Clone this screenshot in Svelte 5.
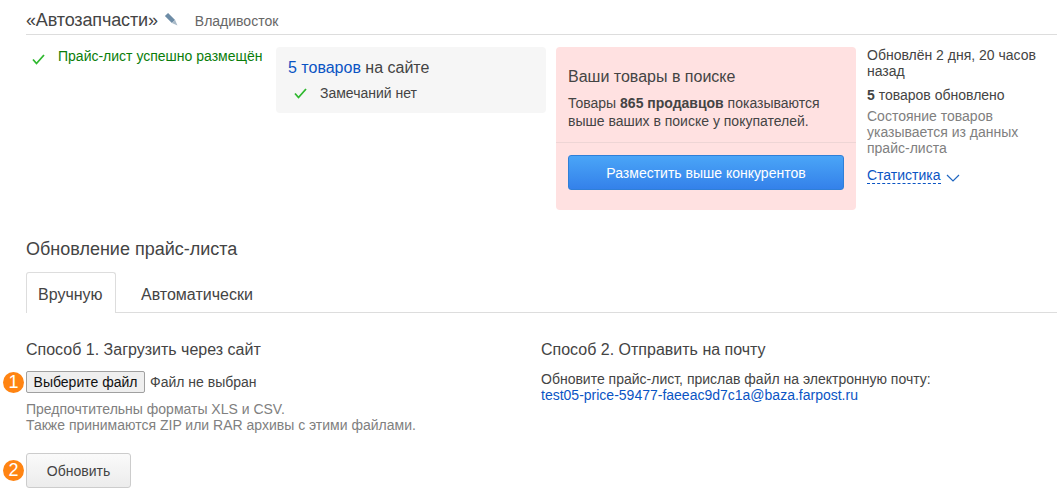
<script>
	const check = 'M1 5.5 L4.5 9.5 L12 1';
</script>

<div class="page">
	<header class="head">
		<span class="title">«Автозапчасти»</span>
		<svg class="pencil" width="14" height="14" viewBox="0 0 14 14">
			<path d="M2.5 2.5 L9.5 9.5" stroke="#6d8ca6" stroke-width="4.5" />
			<path d="M11.1 7.9 L13.5 13.5 L7.9 11.1 Z" fill="#a9bac8" />
		</svg>
		<span class="city">Владивосток</span>
	</header>

	<section class="summary">
		<div class="status">
			<svg class="tick" width="13" height="11" viewBox="0 0 13 11"><path d={check} /></svg>
			<span>Прайс-лист успешно размещён</span>
		</div>

		<div class="onsite">
			<div class="count"><a href="#goods">5 товаров</a> на сайте</div>
			<div class="remarks">
				<svg class="tick" width="13" height="11" viewBox="0 0 13 11"><path d={check} /></svg>
				<span>Замечаний нет</span>
			</div>
		</div>

		<div class="promo">
			<div class="promo-body">
				<h3>Ваши товары в поиске</h3>
				<p>Товары <b>865 продавцов</b> показываются выше ваших в поиске у покупателей.</p>
			</div>
			<div class="promo-foot">
				<button class="primary">Разместить выше конкурентов</button>
			</div>
		</div>

		<aside class="info">
			<p class="updated">Обновлён 2 дня, 20 часов назад</p>
			<p class="updated-count"><b>5</b> товаров обновлено</p>
			<p class="note">Состояние товаров указывается из данных прайс-листа</p>
			<div class="stats">
				<a href="#stats">Статистика</a>
				<svg width="14" height="8" viewBox="0 0 14 8"><path d="M1 1 L7 7 L13 1" /></svg>
			</div>
		</aside>
	</section>

	<h2>Обновление прайс-листа</h2>

	<nav class="tabs">
		<span class="tab active">Вручную</span>
		<span class="tab">Автоматически</span>
	</nav>

	<section class="ways">
		<div class="way">
			<h4>Способ 1. Загрузить через сайт</h4>
			<div class="file">
				<span class="badge">1</span>
				<button class="choose">Выберите файл</button>
				<span>Файл не выбран</span>
			</div>
			<p class="hint">Предпочтительны форматы XLS и CSV.<br />Также принимаются ZIP или RAR архивы с этими файлами.</p>
			<div class="submit">
				<span class="badge">2</span>
				<button class="update">Обновить</button>
			</div>
		</div>
		<div class="way">
			<h4>Способ 2. Отправить на почту</h4>
			<p class="mail">Обновите прайс-лист, прислав файл на электронную почту:<br /><a href="#mail">test05-price-59477-faeeac9d7c1a@baza.farpost.ru</a></p>
		</div>
	</section>
</div>

<style>
	:global(body) {
		background: #fff;
	}

	.page {
		box-sizing: border-box;
		width: 1057px;
		height: 498px;
		padding-left: 26px;
		overflow: hidden;
		font-family: 'Liberation Sans', Arial, sans-serif;
		font-size: 14px;
		color: #444;
	}

	a {
		color: #0a54c4;
		text-decoration: none;
	}

	p,
	h2,
	h3,
	h4 {
		margin: 0;
		font-weight: normal;
	}

	.head {
		display: flex;
		align-items: baseline;
		box-sizing: border-box;
		height: 35px;
		padding-top: 9px;
		border-bottom: 1px solid #ddd;
	}

	.title {
		font-size: 18px;
		line-height: 22px;
		letter-spacing: -0.14px;
	}

	.pencil {
		align-self: flex-start;
		margin: 3px 0 0 6px;
	}

	.city {
		margin-left: 17px;
		font-size: 14px;
		color: #666;
	}

	.tick path {
		fill: none;
		stroke: #2eb82e;
		stroke-width: 1.8;
	}

	.summary {
		display: grid;
		grid-template-columns: 250px 270px 300px 190px;
		align-items: start;
		padding-top: 12px;
	}

	.status {
		display: flex;
		gap: 13px;
		padding: 1px 0 0 6px;
		line-height: 16px;
		color: #0a7d0a;
		white-space: nowrap;
	}

	.status .tick {
		margin-top: 6px;
	}

	.onsite {
		box-sizing: border-box;
		height: 66px;
		padding: 11px 12px;
		background: #f6f6f6;
		border-radius: 4px;
	}

	.count {
		font-size: 16px;
		line-height: 20px;
	}

	.remarks {
		display: flex;
		align-items: center;
		gap: 13px;
		margin-top: 6px;
		padding-left: 6px;
		line-height: 18px;
	}

	.promo {
		margin-left: 10px;
		width: 300px;
		height: 163px;
		box-sizing: border-box;
		background: #ffe1e1;
		border-radius: 4px;
	}

	.promo-body {
		height: 96px;
		box-sizing: border-box;
		padding: 20px 12px 0;
		border-bottom: 1px solid #eed5d5;
	}

	.promo h3 {
		font-size: 16px;
		line-height: 20px;
		margin-bottom: 7px;
	}

	.promo p {
		line-height: 18px;
	}

	.promo-foot {
		padding: 12px 12px 0;
	}

	.primary {
		display: block;
		width: 276px;
		height: 35px;
		padding: 0;
		border: 1px solid #2f7fd8;
		border-radius: 3px;
		background: linear-gradient(#4aa5f7, #3481ea);
		color: #fff;
		font: 14px 'Liberation Sans', Arial, sans-serif;
	}

	.info {
		margin-left: 21px;
		width: 170px;
		line-height: 16px;
	}

	.updated-count {
		margin-top: 8px;
	}

	.note {
		margin-top: 5px;
		color: #808080;
	}

	.stats {
		display: flex;
		align-items: center;
		gap: 5px;
		margin-top: 11px;
		line-height: 16px;
	}

	.stats a {
		border-bottom: 1px dashed #0a54c4;
	}

	.stats svg {
		margin-top: 4px;
	}

	.stats path {
		fill: none;
		stroke: #1f66c0;
		stroke-width: 1.2;
	}

	h2 {
		margin-top: 28px;
		font-size: 18px;
		line-height: 22px;
	}

	.tabs {
		display: flex;
		height: 41px;
		box-sizing: border-box;
		margin-top: 12px;
		border-bottom: 1px solid #ddd;
		font-size: 16px;
	}

	.tab {
		box-sizing: border-box;
		height: 41px;
		padding: 12px 11px 0;
		line-height: 20px;
		margin-right: 1px;
		border: 1px solid transparent;
		border-bottom: 0;
	}

	.tab.active {
		width: 90px;
		background: #fff;
		border-color: #ddd;
		border-radius: 3px 3px 0 0;
	}

	.tab:not(.active) {
		padding-left: 23px;
	}

	.ways {
		display: grid;
		grid-template-columns: 515px 1fr;
		padding-top: 27px;
	}

	h4 {
		font-size: 16px;
		line-height: 20px;
	}

	.file {
		position: relative;
		display: flex;
		align-items: center;
		gap: 5px;
		margin-top: 11px;
	}

	.badge {
		position: absolute;
		left: -23px;
		top: 1px;
		width: 21px;
		height: 21px;
		border-radius: 50%;
		background: #ff8412;
		color: #fff;
		font-size: 18px;
		line-height: 21px;
		text-align: center;
	}

	.choose {
		box-sizing: border-box;
		width: 119px;
		height: 22px;
		padding: 0;
		border: 1px solid #a0a0a0;
		border-radius: 2px;
		background: #efefef;
		color: #111;
		font: 14px 'Liberation Sans', Arial, sans-serif;
	}

	.hint {
		margin-top: 8px;
		line-height: 16px;
		color: #808080;
	}

	.submit {
		position: relative;
		margin-top: 20px;
	}

	.submit .badge {
		top: 7px;
	}

	.update {
		box-sizing: border-box;
		width: 105px;
		height: 35px;
		padding: 0;
		border: 1px solid #ccc;
		border-radius: 3px;
		background: linear-gradient(#fafafa, #ececec);
		color: #444;
		font: 14px 'Liberation Sans', Arial, sans-serif;
	}

	.mail {
		margin-top: 11px;
		line-height: 16px;
	}
</style>
